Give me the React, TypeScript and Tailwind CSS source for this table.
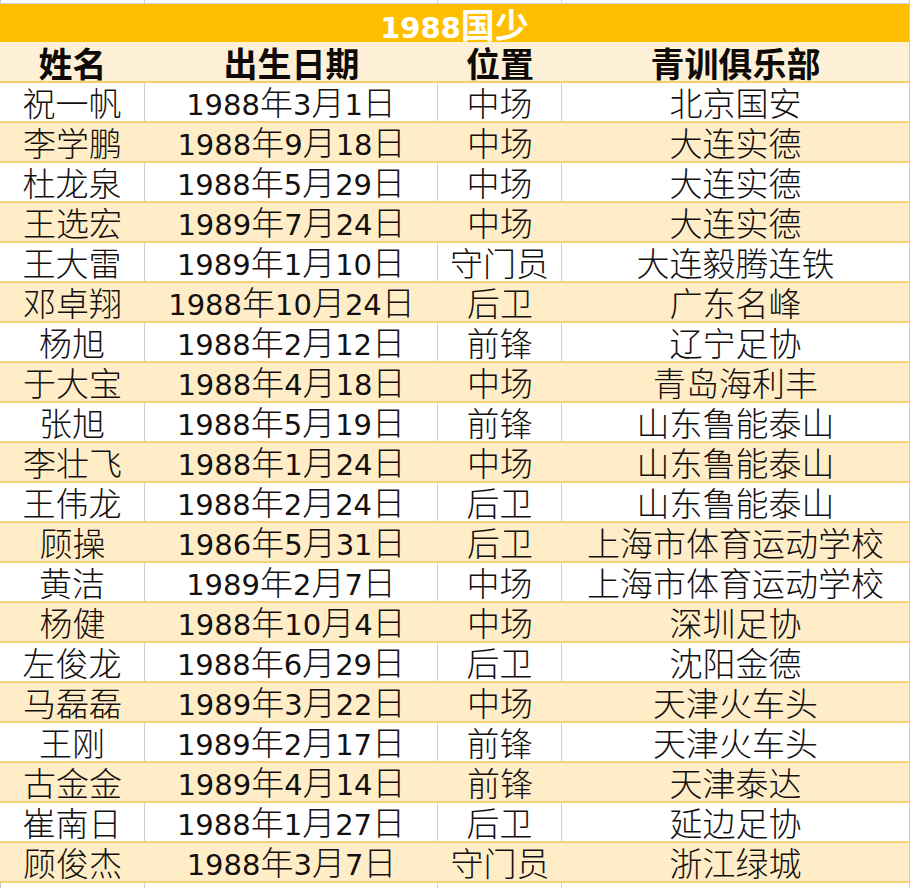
import React from "react";

type Row = [string, string, string, string];

const rows: Row[] = [
  ["祝一帆", "1988年3月1日", "中场", "北京国安"],
  ["李学鹏", "1988年9月18日", "中场", "大连实德"],
  ["杜龙泉", "1988年5月29日", "中场", "大连实德"],
  ["王选宏", "1989年7月24日", "中场", "大连实德"],
  ["王大雷", "1989年1月10日", "守门员", "大连毅腾连铁"],
  ["邓卓翔", "1988年10月24日", "后卫", "广东名峰"],
  ["杨旭", "1988年2月12日", "前锋", "辽宁足协"],
  ["于大宝", "1988年4月18日", "中场", "青岛海利丰"],
  ["张旭", "1988年5月19日", "前锋", "山东鲁能泰山"],
  ["李壮飞", "1988年1月24日", "中场", "山东鲁能泰山"],
  ["王伟龙", "1988年2月24日", "后卫", "山东鲁能泰山"],
  ["顾操", "1986年5月31日", "后卫", "上海市体育运动学校"],
  ["黄洁", "1989年2月7日", "中场", "上海市体育运动学校"],
  ["杨健", "1988年10月4日", "中场", "深圳足协"],
  ["左俊龙", "1988年6月29日", "后卫", "沈阳金德"],
  ["马磊磊", "1989年3月22日", "中场", "天津火车头"],
  ["王刚", "1989年2月17日", "前锋", "天津火车头"],
  ["古金金", "1989年4月14日", "前锋", "天津泰达"],
  ["崔南日", "1988年1月27日", "后卫", "延边足协"],
  ["顾俊杰", "1988年3月7日", "守门员", "浙江绿城"],
];

function Mixed({ text, digitCls, cjkCls }: { text: string; digitCls: string; cjkCls: string }) {
  const parts = text.split(/(\d+)/).filter((p) => p.length > 0);
  return (
    <span className="whitespace-nowrap">
      {parts.map((p, i) =>
        /^\d+$/.test(p) ? (
          <span key={i} className={digitCls}>
            {p}
          </span>
        ) : (
          <span key={i} className={cjkCls}>
            {p}
          </span>
        )
      )}
    </span>
  );
}

const DIG = "font-['DejaVu_Sans',sans-serif] text-[29px]";
const CJK = "font-['Noto_Sans_CJK_SC',sans-serif] text-[33px] font-light";

const cols = "grid grid-cols-[145px_293px_124px_347px]";

export default function App() {
  return (
    <div className="w-[916px] h-[888px] bg-white overflow-hidden flex text-[#151010] leading-none">
      <div className="w-[909px] flex flex-col shadow-[inset_1px_0_0_#c4c4c4]">
        {/* top partial row */}
        <div className={`${cols} h-[4px] border-b border-[#d2d2d2]`}>
          <div className="border-r border-[#d2d2d2]" />
          <div className="border-r border-[#d2d2d2]" />
          <div className="border-r border-[#d2d2d2]" />
          <div />
        </div>
        {/* title */}
        <div className="h-[38px] bg-[#FFBF00] flex items-center justify-center text-white font-bold pt-[4px]">
          <Mixed
            text="1988国少"
            digitCls="font-['DejaVu_Sans',sans-serif] text-[29px] font-bold"
            cjkCls="font-['Noto_Sans_CJK_SC',sans-serif] text-[34px] font-bold"
          />
        </div>
        {/* header */}
        <div className={`${cols} h-[41px] bg-[#FDF0D7] border-b-2 border-[#F5CF6A]`}>
          {["姓名", "出生日期", "位置", "青训俱乐部"].map((h) => (
            <div
              key={h}
              className="flex items-end justify-center pb-[1px] font-['Noto_Sans_CJK_SC',sans-serif] text-[34px] font-bold text-[#0d0a08]"
            >
              {h}
            </div>
          ))}
        </div>
        {/* data rows */}
        {rows.map((r, i) => {
          const yellow = i % 2 === 1;
          return (
            <div
              key={i}
              className={`${cols} h-[40px] shrink-0 border-b-2 border-[#F6D274] ${
                yellow ? "bg-[#FEEDC6]" : "bg-white"
              }`}
            >
              {r.map((c, j) => (
                <div
                  key={j}
                  className={`flex items-center justify-center pt-[1px] ${
                    !yellow && j < 3 ? "border-r border-[#d0d0d0]" : ""
                  }`}
                >
                  <Mixed text={c} digitCls={DIG} cjkCls={CJK} />
                </div>
              ))}
            </div>
          );
        })}
        {/* bottom partial row */}
        <div className={`${cols} flex-1`}>
          <div className="border-r border-[#d2d2d2]" />
          <div className="border-r border-[#d2d2d2]" />
          <div className="border-r border-[#d2d2d2]" />
          <div />
        </div>
      </div>
      <div className="w-[7px] border-l border-[#E6CD86] bg-white" />
    </div>
  );
}
